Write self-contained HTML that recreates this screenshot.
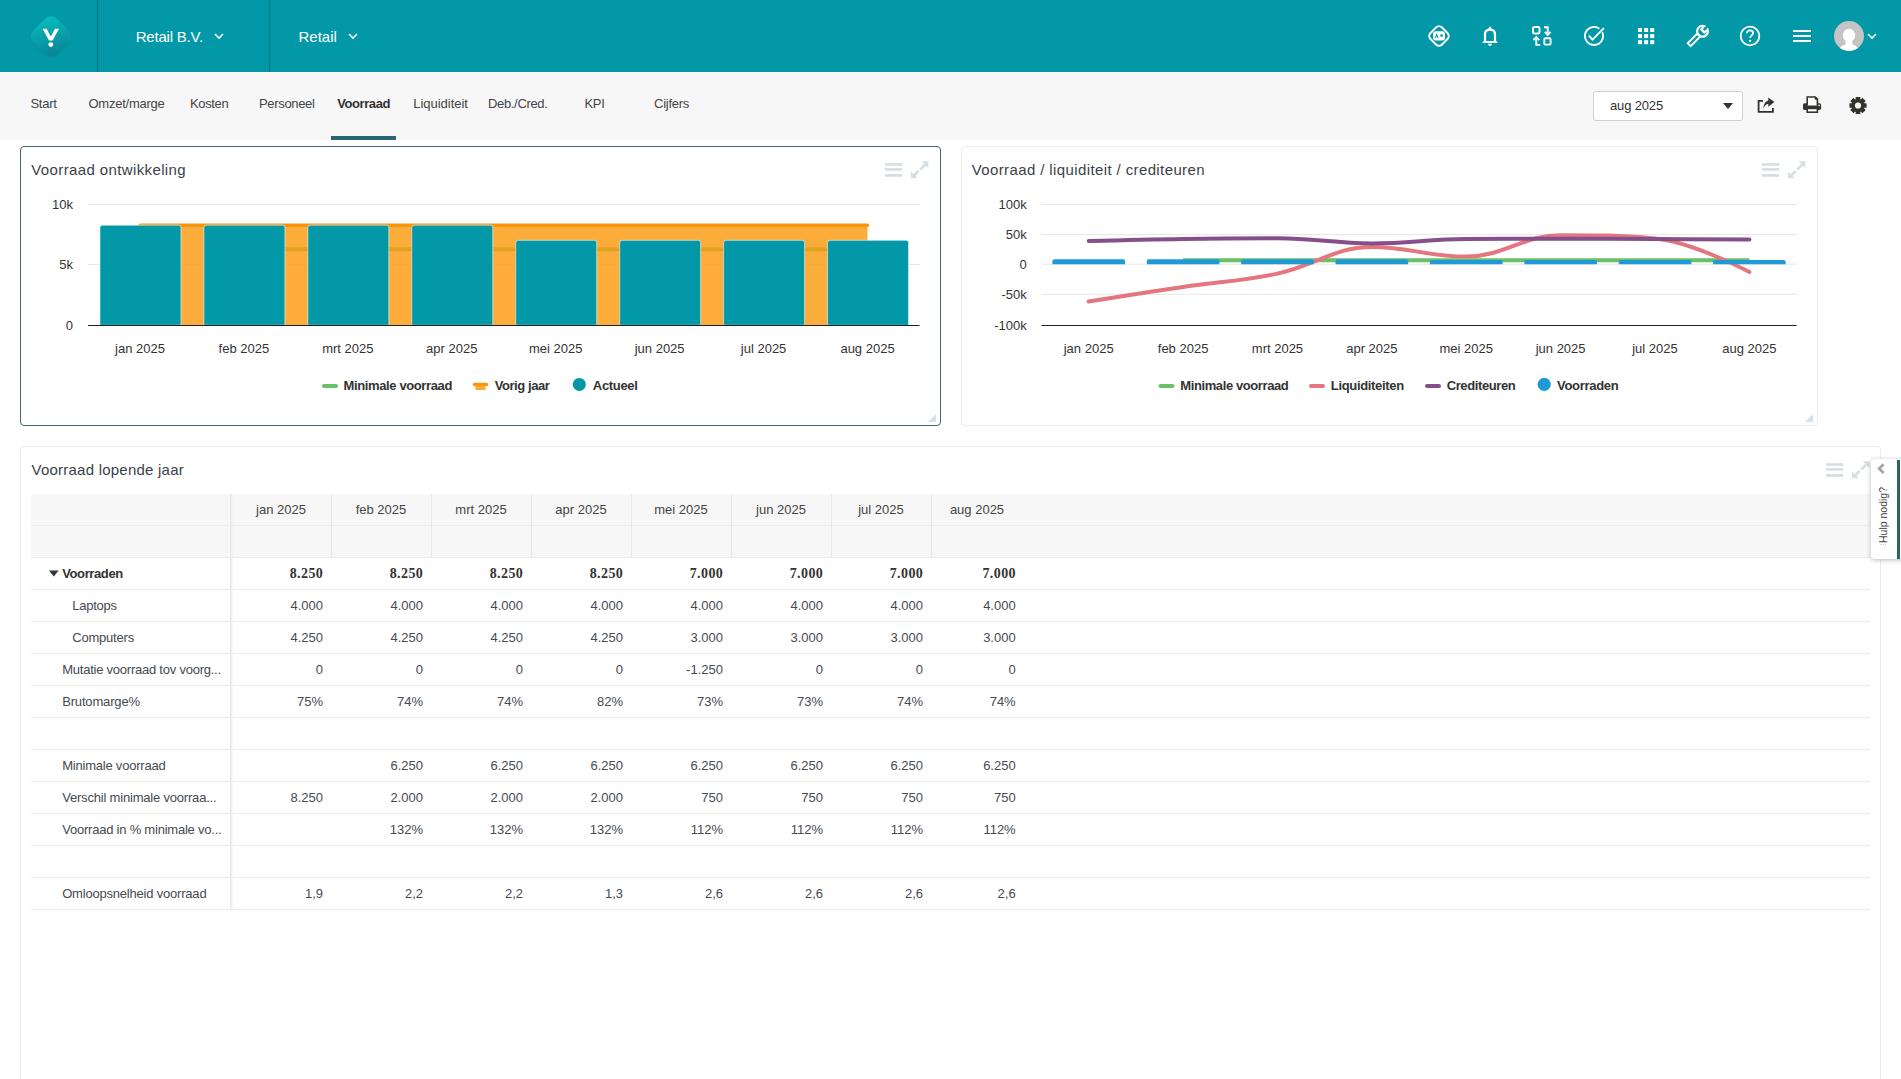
<!DOCTYPE html>
<html><head><meta charset="utf-8"><title>Voorraad</title>
<style>
html,body{margin:0;padding:0;width:1901px;height:1079px;overflow:hidden;background:#fff;}
body{position:relative;font-family:"Liberation Sans",sans-serif;}
.t{position:absolute;white-space:nowrap;}
</style></head><body>
<div style="position:absolute;left:0;top:0;width:1901px;height:72px;background:#0398a8"></div>
<div style="position:absolute;left:97px;top:0;width:1px;height:72px;background:#02707d"></div>
<div style="position:absolute;left:269px;top:0;width:1px;height:72px;background:#02707d"></div>
<svg style="position:absolute;left:21px;top:7px" width="60" height="60" viewBox="0 0 60 60">
<defs><linearGradient id="lg" x1="0" y1="0.2" x2="1" y2="0.8"><stop offset="0" stop-color="#06bcbb"/><stop offset="1" stop-color="#0b8396"/></linearGradient>
<filter id="ls" x="-30%" y="-30%" width="160%" height="160%"><feGaussianBlur stdDeviation="1.2"/></filter></defs>
<rect x="13.2" y="13.4" width="33.6" height="33.6" rx="8.5" transform="rotate(45 30 30.2)" fill="#067f8c" opacity="0.35" filter="url(#ls)"/>
<rect x="13.2" y="12.6" width="33.6" height="33.6" rx="8.5" transform="rotate(45 30 29.4)" fill="url(#lg)"/>
<path d="M21.6 21.8 L25.6 21.8 L29.8 29.6 L34 21.8 L38 21.8 L31.6 33.6 L28 33.6 Z" fill="#fff"/>
<circle cx="29.8" cy="37.6" r="2.4" fill="#fff"/>
</svg>
<div class="t" style="left:135.70px;top:29.30px;font-size:15px;line-height:15px;color:#ffffff;letter-spacing:-0.199px;">Retail B.V.</div>
<div class="t" style="left:298.50px;top:29.30px;font-size:15px;line-height:15px;color:#ffffff;letter-spacing:-0.007px;">Retail</div>
<svg style="position:absolute;left:214px;top:33px" width="10" height="7" viewBox="0 0 10 7"><path d="M1 1 L5 5 L9 1" stroke="#fff" stroke-width="1.6" fill="none"/></svg>
<svg style="position:absolute;left:348px;top:33px" width="10" height="7" viewBox="0 0 10 7"><path d="M1 1 L5 5 L9 1" stroke="#fff" stroke-width="1.6" fill="none"/></svg>
<svg style="position:absolute;left:1427px;top:24px" width="24" height="24" viewBox="0 0 24 24">
<rect x="3.9" y="3.9" width="16.2" height="16.2" rx="4.2" transform="rotate(45 12 12)" fill="none" stroke="#ffffff" stroke-width="2"/>
<rect x="6" y="7.2" width="12" height="9.2" rx="3" fill="#ffffff"/>
<path d="M8.2 14 L9.6 10.6 L11 14" stroke="#0398a8" stroke-width="1.1" fill="none"/>
<circle cx="14.6" cy="11.6" r="1.4" fill="#0398a8"/>
</svg>
<svg style="position:absolute;left:1480px;top:25px" width="20" height="22" viewBox="0 0 20 22">
<path fill-rule="evenodd" fill="#ffffff" d="M2 18 L3.9 15.8 L3.9 9 C3.9 5.6 6.5 3.5 10 3.5 C13.5 3.5 16.1 5.6 16.1 9 L16.1 15.8 L18 18 Z M6.1 15.9 L6.1 9 C6.1 6.9 7.7 5.7 10 5.7 C12.3 5.7 13.9 6.9 13.9 9 L13.9 15.9 Z"/>
<path d="M8.3 4 L10 0.9 L11.7 4 Z" fill="#ffffff"/>
<path d="M8 18.8 L12 18.8 A2 2.1 0 0 1 8 18.8 Z" fill="#ffffff"/>
</svg>
<svg style="position:absolute;left:1531px;top:25px" width="22" height="22" viewBox="0 0 22 22">
<rect x="2" y="2" width="6.5" height="6.5" rx="1.2" fill="none" stroke="#ffffff" stroke-width="1.9"/>
<rect x="13.3" y="13.3" width="6.3" height="6.3" rx="1.2" fill="none" stroke="#ffffff" stroke-width="1.9"/>
<path d="M13 2.2 L16.7 2.2 L16.7 8.6" fill="none" stroke="#ffffff" stroke-width="1.9"/>
<path d="M13.8 6.8 L16.7 9.8 L19.6 6.8" fill="none" stroke="#ffffff" stroke-width="1.9"/>
<path d="M9.2 19.9 L5.3 19.9 L5.3 13.2" fill="none" stroke="#ffffff" stroke-width="1.9"/>
<path d="M2.4 15.2 L5.3 12.2 L8.2 15.2" fill="none" stroke="#ffffff" stroke-width="1.9"/>
</svg>
<svg style="position:absolute;left:1583px;top:25px" width="22" height="22" viewBox="0 0 22 22">
<path d="M15.66 3.24 A9.05 9.05 0 1 0 19.5 7.9" fill="none" stroke="#ffffff" stroke-width="1.9" stroke-linecap="round"/>
<path d="M6.3 11.2 L9.5 14.7 L20.4 3.6" fill="none" stroke="#ffffff" stroke-width="1.9" stroke-linecap="round" stroke-linejoin="round"/>
</svg>
<svg style="position:absolute;left:0;top:0" width="1901" height="72"><rect x="1638.0" y="28.0" width="4" height="4" fill="#ffffff"/><rect x="1638.0" y="34.1" width="4" height="4" fill="#ffffff"/><rect x="1638.0" y="40.2" width="4" height="4" fill="#ffffff"/><rect x="1644.1" y="28.0" width="4" height="4" fill="#ffffff"/><rect x="1644.1" y="34.1" width="4" height="4" fill="#ffffff"/><rect x="1644.1" y="40.2" width="4" height="4" fill="#ffffff"/><rect x="1650.2" y="28.0" width="4" height="4" fill="#ffffff"/><rect x="1650.2" y="34.1" width="4" height="4" fill="#ffffff"/><rect x="1650.2" y="40.2" width="4" height="4" fill="#ffffff"/></svg>
<svg style="position:absolute;left:0;top:0" width="1901" height="72"><g transform="rotate(45 1702.5 31.3)">
<circle cx="1702.5" cy="31.3" r="5.4" fill="none" stroke="#ffffff" stroke-width="2.2"/>
<rect x="1699.3" y="27.6" width="6.4" height="4.4" fill="#ffffff"/>
<rect x="1701.3" y="24" width="2.4" height="5.6" fill="#0398a8"/>
<rect x="1700.4" y="36.6" width="4.2" height="13.6" fill="none" stroke="#ffffff" stroke-width="1.9"/>
</g></svg>
<svg style="position:absolute;left:1739px;top:25px" width="22" height="22" viewBox="0 0 22 22">
<circle cx="11" cy="11" r="9.3" fill="none" stroke="#ffffff" stroke-width="1.8"/>
<path d="M7.9 8.3 C7.9 6.4 9.3 5.3 11 5.3 C12.8 5.3 14.1 6.5 14.1 8.1 C14.1 10.3 11.1 10.5 11.1 13" fill="none" stroke="#ffffff" stroke-width="1.8"/>
<circle cx="11.1" cy="16" r="1.15" fill="#ffffff"/>
</svg>
<svg style="position:absolute;left:1792px;top:29px" width="20" height="14" viewBox="0 0 20 14">
<rect x="1" y="1" width="18" height="2" fill="#ffffff"/><rect x="1" y="6" width="18" height="2" fill="#ffffff"/><rect x="1" y="11" width="18" height="2" fill="#ffffff"/>
</svg>
<svg style="position:absolute;left:1834px;top:21px" width="30" height="30" viewBox="0 0 30 30">
<defs><clipPath id="av"><circle cx="15" cy="15" r="15"/></clipPath></defs>
<circle cx="15" cy="15" r="15" fill="#c4c4c4"/>
<g clip-path="url(#av)"><ellipse cx="15" cy="14.4" rx="6.2" ry="6.6" fill="#fff"/><rect x="11.6" y="17" width="6.8" height="8" fill="#fff"/><ellipse cx="15" cy="30.2" rx="10" ry="7.2" fill="#fff"/></g>
</svg>
<svg style="position:absolute;left:1867px;top:33px" width="10" height="7" viewBox="0 0 10 7"><path d="M1 1 L5 5 L9 1" stroke="#fff" stroke-width="1.6" fill="none"/></svg>
<div style="position:absolute;left:0;top:72px;width:1901px;height:68px;background:#f7f7f7"></div>
<div class="t" style="left:30.40px;top:97.00px;font-size:13px;line-height:13px;color:#444444;letter-spacing:-0.231px;">Start</div>
<div class="t" style="left:88.50px;top:97.00px;font-size:13px;line-height:13px;color:#444444;letter-spacing:-0.250px;">Omzet/marge</div>
<div class="t" style="left:190.00px;top:97.00px;font-size:13px;line-height:13px;color:#444444;letter-spacing:-0.347px;">Kosten</div>
<div class="t" style="left:259.00px;top:97.00px;font-size:13px;line-height:13px;color:#444444;letter-spacing:-0.329px;">Personeel</div>
<div class="t" style="left:337.20px;top:97.00px;font-size:13px;line-height:13px;color:#333333;font-weight:bold;letter-spacing:-0.414px;">Voorraad</div>
<div class="t" style="left:413.20px;top:97.00px;font-size:13px;line-height:13px;color:#444444;letter-spacing:-0.014px;">Liquiditeit</div>
<div class="t" style="left:488.00px;top:97.00px;font-size:13px;line-height:13px;color:#444444;letter-spacing:-0.338px;">Deb./Cred.</div>
<div class="t" style="left:584.40px;top:97.00px;font-size:13px;line-height:13px;color:#444444;letter-spacing:-0.218px;">KPI</div>
<div class="t" style="left:654.00px;top:97.00px;font-size:13px;line-height:13px;color:#444444;letter-spacing:-0.263px;">Cijfers</div>
<div style="position:absolute;left:331px;top:136px;width:65px;height:4px;background:#2b6573"></div>
<div style="position:absolute;left:1593px;top:91px;width:148px;height:28px;border:1px solid #cfcfcf;border-radius:3px;background:#fff"></div>
<div class="t" style="left:1610.00px;top:99.00px;font-size:13px;line-height:13px;color:#333333;letter-spacing:-0.156px;">aug 2025</div>
<svg style="position:absolute;left:1722px;top:102px" width="12" height="8" viewBox="0 0 12 8"><path d="M1 1 L11 1 L6 7 Z" fill="#35332f"/></svg>
<svg style="position:absolute;left:1756px;top:96px" width="20" height="19" viewBox="0 0 20 19">
<path d="M7 4.9 L2.6 4.9 L2.6 15.8 L16.9 15.8 L16.9 12" fill="none" stroke="#35332f" stroke-width="1.8"/>
<path d="M7.3 12.6 C7.6 8.2 9.4 5.2 12.3 4.4 L12.3 1.5 L18.4 6.1 L12.3 10.7 L12.3 7.7 C10.2 8 8.4 9.6 7.3 12.6 Z" fill="#35332f"/>
</svg>
<svg style="position:absolute;left:1802px;top:95px" width="21" height="19" viewBox="0 0 21 19">
<rect x="1" y="8.2" width="18.1" height="6.7" rx="1.6" fill="#35332f"/>
<path d="M5.2 10.6 L5.2 2 L13.2 2 L15.4 4.2 L15.4 10.6" fill="#fff" stroke="#35332f" stroke-width="1.6"/>
<path d="M13.2 2 L13.2 4.2 L15.4 4.2 Z" fill="#35332f" stroke="#35332f" stroke-width="1"/>
<rect x="5.2" y="13.4" width="10.2" height="3.8" fill="#fff" stroke="#35332f" stroke-width="1.6"/>
<circle cx="17.2" cy="10.4" r="0.8" fill="#fff"/>
</svg>
<svg style="position:absolute;left:1848px;top:96px" width="20" height="19" viewBox="0 0 20 19"><g transform="translate(10 9.5)"><circle r="6.6" fill="#35332f"/><rect x="-2.3" y="-8.6" width="4.6" height="4" rx="0.6" transform="rotate(0)" fill="#35332f"/><rect x="-2.3" y="-8.6" width="4.6" height="4" rx="0.6" transform="rotate(45)" fill="#35332f"/><rect x="-2.3" y="-8.6" width="4.6" height="4" rx="0.6" transform="rotate(90)" fill="#35332f"/><rect x="-2.3" y="-8.6" width="4.6" height="4" rx="0.6" transform="rotate(135)" fill="#35332f"/><rect x="-2.3" y="-8.6" width="4.6" height="4" rx="0.6" transform="rotate(180)" fill="#35332f"/><rect x="-2.3" y="-8.6" width="4.6" height="4" rx="0.6" transform="rotate(225)" fill="#35332f"/><rect x="-2.3" y="-8.6" width="4.6" height="4" rx="0.6" transform="rotate(270)" fill="#35332f"/><rect x="-2.3" y="-8.6" width="4.6" height="4" rx="0.6" transform="rotate(315)" fill="#35332f"/><circle r="3.1" fill="#f7f7f7"/></g></svg>
<div style="position:absolute;left:20px;top:146px;width:919px;height:278px;border:1.4px solid #456570;border-radius:4px;background:#fff"></div>
<div style="position:absolute;left:961px;top:146px;width:855px;height:278px;border:1px solid #ececec;border-radius:4px;background:#fff"></div>
<div style="position:absolute;left:20px;top:446px;width:1859px;height:700px;border:1px solid #ececec;border-radius:4px;background:#fff"></div>
<div class="t" style="left:31.30px;top:161.80px;font-size:15px;line-height:15px;color:#3b3f4a;letter-spacing:0.378px;">Voorraad ontwikkeling</div>
<div class="t" style="left:971.70px;top:161.80px;font-size:15px;line-height:15px;color:#3b3f4a;letter-spacing:0.388px;">Voorraad / liquiditeit / crediteuren</div>
<div class="t" style="left:31.50px;top:461.80px;font-size:15px;line-height:15px;color:#3b3f4a;letter-spacing:0.231px;">Voorraad lopende jaar</div>
<svg style="position:absolute;left:885px;top:161px" width="46" height="20" viewBox="0 0 46 20"><rect x="0" y="2.2" width="17.2" height="2.6" fill="#d5dfe3"/><rect x="0" y="7.1" width="17.2" height="2.6" fill="#d5dfe3"/><rect x="0" y="13" width="17.2" height="2.8" fill="#d5dfe3"/><path d="M36.7 0.2 L43.4 0.2 L43.4 6.9 Z" fill="#d5dfe3"/><path d="M26 10.6 L26 17.3 L32.7 17.3 Z" fill="#d5dfe3"/><path d="M40.6 3.2 L35.2 8.6 M33.6 10 L28.6 15" stroke="#d5dfe3" stroke-width="2.5" fill="none"/></svg>
<svg style="position:absolute;left:1762px;top:161px" width="46" height="20" viewBox="0 0 46 20"><rect x="0" y="2.2" width="17.2" height="2.6" fill="#d5dfe3"/><rect x="0" y="7.1" width="17.2" height="2.6" fill="#d5dfe3"/><rect x="0" y="13" width="17.2" height="2.8" fill="#d5dfe3"/><path d="M36.7 0.2 L43.4 0.2 L43.4 6.9 Z" fill="#d5dfe3"/><path d="M26 10.6 L26 17.3 L32.7 17.3 Z" fill="#d5dfe3"/><path d="M40.6 3.2 L35.2 8.6 M33.6 10 L28.6 15" stroke="#d5dfe3" stroke-width="2.5" fill="none"/></svg>
<svg style="position:absolute;left:1825.5px;top:461px" width="46" height="20" viewBox="0 0 46 20"><rect x="0" y="2.2" width="17.2" height="2.6" fill="#d5dfe3"/><rect x="0" y="7.1" width="17.2" height="2.6" fill="#d5dfe3"/><rect x="0" y="13" width="17.2" height="2.8" fill="#d5dfe3"/><path d="M36.7 0.2 L43.4 0.2 L43.4 6.9 Z" fill="#d5dfe3"/><path d="M26 10.6 L26 17.3 L32.7 17.3 Z" fill="#d5dfe3"/><path d="M40.6 3.2 L35.2 8.6 M33.6 10 L28.6 15" stroke="#d5dfe3" stroke-width="2.5" fill="none"/></svg>
<svg style="position:absolute;left:926px;top:412px" width="12" height="12"><path d="M10 2 L10 10 L2 10 Z" fill="#cfe3f0"/></svg>
<svg style="position:absolute;left:1803px;top:412px" width="12" height="12"><path d="M10 2 L10 10 L2 10 Z" fill="#cfe3f0"/></svg>
<svg style="position:absolute;left:0;top:0" width="1901" height="430">
<line x1="88" y1="204.5" x2="919.5" y2="204.5" stroke="#e6e6e6" stroke-width="1"/>
<line x1="88" y1="264.5" x2="919.5" y2="264.5" stroke="#e6e6e6" stroke-width="1"/>
<path d="M 243.91 249.3 L 867.53 249.3" stroke="#6abf69" stroke-width="4" fill="none"/>
<path d="M 139.97 225.15 L 867.53 225.15 L 867.53 325.3 L 139.97 325.3 Z" fill="#fb9a10" fill-opacity="0.82"/>
<path d="M 139.97 225.15 L 867.53 225.15" stroke="#fa960e" stroke-width="3.5" stroke-linecap="round" fill="none"/>
<path d="M 99.97 325.3 L 99.97 227.65 Q 99.97 225.15 102.47 225.15 L 178.47 225.15 Q 180.97 225.15 180.97 227.65 L 180.97 325.3 Z" fill="#0398a8" stroke="#ffffff" stroke-opacity="0.55" stroke-width="1"/>
<path d="M 203.91 325.3 L 203.91 227.65 Q 203.91 225.15 206.41 225.15 L 282.41 225.15 Q 284.91 225.15 284.91 227.65 L 284.91 325.3 Z" fill="#0398a8" stroke="#ffffff" stroke-opacity="0.55" stroke-width="1"/>
<path d="M 307.84 325.3 L 307.84 227.65 Q 307.84 225.15 310.34 225.15 L 386.34 225.15 Q 388.84 225.15 388.84 227.65 L 388.84 325.3 Z" fill="#0398a8" stroke="#ffffff" stroke-opacity="0.55" stroke-width="1"/>
<path d="M 411.78 325.3 L 411.78 227.65 Q 411.78 225.15 414.28 225.15 L 490.28 225.15 Q 492.78 225.15 492.78 227.65 L 492.78 325.3 Z" fill="#0398a8" stroke="#ffffff" stroke-opacity="0.55" stroke-width="1"/>
<path d="M 515.72 325.3 L 515.72 242.82 Q 515.72 240.32 518.22 240.32 L 594.22 240.32 Q 596.72 240.32 596.72 242.82 L 596.72 325.3 Z" fill="#0398a8" stroke="#ffffff" stroke-opacity="0.55" stroke-width="1"/>
<path d="M 619.66 325.3 L 619.66 242.82 Q 619.66 240.32 622.16 240.32 L 698.16 240.32 Q 700.66 240.32 700.66 242.82 L 700.66 325.3 Z" fill="#0398a8" stroke="#ffffff" stroke-opacity="0.55" stroke-width="1"/>
<path d="M 723.59 325.3 L 723.59 242.82 Q 723.59 240.32 726.09 240.32 L 802.09 240.32 Q 804.59 240.32 804.59 242.82 L 804.59 325.3 Z" fill="#0398a8" stroke="#ffffff" stroke-opacity="0.55" stroke-width="1"/>
<path d="M 827.53 325.3 L 827.53 242.82 Q 827.53 240.32 830.03 240.32 L 906.03 240.32 Q 908.53 240.32 908.53 242.82 L 908.53 325.3 Z" fill="#0398a8" stroke="#ffffff" stroke-opacity="0.55" stroke-width="1"/>
<line x1="88" y1="325.5" x2="919.5" y2="325.5" stroke="#1e1e1e" stroke-width="1.2"/>
<line x1="1041.5" y1="204.5" x2="1796.6" y2="204.5" stroke="#e6e6e6" stroke-width="1"/>
<line x1="1041.5" y1="234.6" x2="1796.6" y2="234.6" stroke="#e6e6e6" stroke-width="1"/>
<line x1="1041.5" y1="264.2" x2="1796.6" y2="264.2" stroke="#e6e6e6" stroke-width="1"/>
<line x1="1041.5" y1="294.3" x2="1796.6" y2="294.3" stroke="#e6e6e6" stroke-width="1"/>
<path d="M 1183.08 260.3 L 1749.41 260.3" stroke="#6abf69" stroke-width="4" fill="none"/>
<path d="M 1088.69 301.60 C 1088.69 301.60 1145.33 292.50 1183.08 286.90 C 1220.84 281.30 1239.71 281.56 1277.47 273.60 C 1315.22 265.64 1334.10 247.10 1371.86 247.10 C 1409.61 247.10 1428.49 256.60 1466.24 256.60 C 1504.00 256.60 1522.88 235.20 1560.63 235.20 C 1598.39 235.20 1617.26 235.20 1655.02 238.50 C 1692.77 241.80 1749.41 272.10 1749.41 272.10" stroke="#e3767e" stroke-width="4" fill="none" stroke-linecap="round"/>
<path d="M 1088.69 241.00 C 1088.69 241.00 1145.33 239.44 1183.08 238.90 C 1220.84 238.36 1239.71 238.30 1277.47 238.30 C 1315.22 238.30 1334.10 243.40 1371.86 243.40 C 1409.61 243.40 1428.49 239.10 1466.24 238.90 C 1504.00 238.70 1522.88 238.70 1560.63 238.70 C 1598.39 238.70 1617.26 238.96 1655.02 239.10 C 1692.77 239.24 1749.41 239.40 1749.41 239.40" stroke="#874e8c" stroke-width="4" fill="none" stroke-linecap="round"/>
<path d="M 1052.39 264.2 L 1052.39 261.22 Q 1052.39 259.22 1054.39 259.22 L 1122.99 259.22 Q 1124.99 259.22 1124.99 261.22 L 1124.99 264.2 Z" fill="#1f9ad6"/>
<path d="M 1146.78 264.2 L 1146.78 261.22 Q 1146.78 259.22 1148.78 259.22 L 1217.38 259.22 Q 1219.38 259.22 1219.38 261.22 L 1219.38 264.2 Z" fill="#1f9ad6"/>
<path d="M 1241.17 264.2 L 1241.17 261.22 Q 1241.17 259.22 1243.17 259.22 L 1311.77 259.22 Q 1313.77 259.22 1313.77 261.22 L 1313.77 264.2 Z" fill="#1f9ad6"/>
<path d="M 1335.56 264.2 L 1335.56 261.22 Q 1335.56 259.22 1337.56 259.22 L 1406.16 259.22 Q 1408.16 259.22 1408.16 261.22 L 1408.16 264.2 Z" fill="#1f9ad6"/>
<path d="M 1429.94 264.2 L 1429.94 261.97 Q 1429.94 259.97 1431.94 259.97 L 1500.54 259.97 Q 1502.54 259.97 1502.54 261.97 L 1502.54 264.2 Z" fill="#1f9ad6"/>
<path d="M 1524.33 264.2 L 1524.33 261.97 Q 1524.33 259.97 1526.33 259.97 L 1594.93 259.97 Q 1596.93 259.97 1596.93 261.97 L 1596.93 264.2 Z" fill="#1f9ad6"/>
<path d="M 1618.72 264.2 L 1618.72 261.97 Q 1618.72 259.97 1620.72 259.97 L 1689.32 259.97 Q 1691.32 259.97 1691.32 261.97 L 1691.32 264.2 Z" fill="#1f9ad6"/>
<path d="M 1713.11 264.2 L 1713.11 261.97 Q 1713.11 259.97 1715.11 259.97 L 1783.71 259.97 Q 1785.71 259.97 1785.71 261.97 L 1785.71 264.2 Z" fill="#1f9ad6"/>
<line x1="1041.5" y1="325.5" x2="1796.6" y2="325.5" stroke="#1e1e1e" stroke-width="1.2"/>
<path d="M 324 385.9 L 336 385.9" stroke="#6abf69" stroke-width="4" stroke-linecap="round"/>
<path d="M 474.5 384.6 L 486.5 384.6" stroke="#fa960e" stroke-width="3.5" stroke-linecap="round"/><rect x="475.5" y="386" width="10" height="4" fill="#fb9a10" fill-opacity="0.82"/>
<circle cx="579.3" cy="384.4" r="6.5" fill="#0398a8"/>
<path d="M 1160.5 385.9 L 1172.5 385.9" stroke="#6abf69" stroke-width="4" stroke-linecap="round"/>
<path d="M 1311 385.9 L 1323 385.9" stroke="#e3767e" stroke-width="4" stroke-linecap="round"/>
<path d="M 1427 385.9 L 1439 385.9" stroke="#874e8c" stroke-width="4" stroke-linecap="round"/>
<circle cx="1544.2" cy="384.4" r="6.6" fill="#1f9ad6"/>
</svg>
<div class="t" style="left:52.03px;top:198.10px;font-size:13px;line-height:13px;color:#333333;">10k</div>
<div class="t" style="left:59.27px;top:258.10px;font-size:13px;line-height:13px;color:#333333;">5k</div>
<div class="t" style="left:65.77px;top:318.80px;font-size:13px;line-height:13px;color:#333333;">0</div>
<div class="t" style="left:998.60px;top:198.10px;font-size:13px;line-height:13px;color:#333333;">100k</div>
<div class="t" style="left:1005.83px;top:228.20px;font-size:13px;line-height:13px;color:#333333;">50k</div>
<div class="t" style="left:1019.57px;top:257.80px;font-size:13px;line-height:13px;color:#333333;">0</div>
<div class="t" style="left:1001.50px;top:287.90px;font-size:13px;line-height:13px;color:#333333;">-50k</div>
<div class="t" style="left:994.27px;top:318.80px;font-size:13px;line-height:13px;color:#333333;">-100k</div>
<div class="t" style="left:115.02px;top:341.50px;font-size:13px;line-height:13px;color:#333333;">jan 2025</div>
<div class="t" style="left:1063.74px;top:341.50px;font-size:13px;line-height:13px;color:#333333;">jan 2025</div>
<div class="t" style="left:218.59px;top:341.50px;font-size:13px;line-height:13px;color:#333333;">feb 2025</div>
<div class="t" style="left:1157.77px;top:341.50px;font-size:13px;line-height:13px;color:#333333;">feb 2025</div>
<div class="t" style="left:322.19px;top:341.50px;font-size:13px;line-height:13px;color:#333333;">mrt 2025</div>
<div class="t" style="left:1251.81px;top:341.50px;font-size:13px;line-height:13px;color:#333333;">mrt 2025</div>
<div class="t" style="left:426.11px;top:341.50px;font-size:13px;line-height:13px;color:#333333;">apr 2025</div>
<div class="t" style="left:1346.18px;top:341.50px;font-size:13px;line-height:13px;color:#333333;">apr 2025</div>
<div class="t" style="left:528.97px;top:341.50px;font-size:13px;line-height:13px;color:#333333;">mei 2025</div>
<div class="t" style="left:1439.49px;top:341.50px;font-size:13px;line-height:13px;color:#333333;">mei 2025</div>
<div class="t" style="left:634.70px;top:341.50px;font-size:13px;line-height:13px;color:#333333;">jun 2025</div>
<div class="t" style="left:1535.68px;top:341.50px;font-size:13px;line-height:13px;color:#333333;">jun 2025</div>
<div class="t" style="left:740.81px;top:341.50px;font-size:13px;line-height:13px;color:#333333;">jul 2025</div>
<div class="t" style="left:1632.24px;top:341.50px;font-size:13px;line-height:13px;color:#333333;">jul 2025</div>
<div class="t" style="left:840.41px;top:341.50px;font-size:13px;line-height:13px;color:#333333;">aug 2025</div>
<div class="t" style="left:1722.28px;top:341.50px;font-size:13px;line-height:13px;color:#333333;">aug 2025</div>
<div class="t" style="left:343.60px;top:379.00px;font-size:13px;line-height:13px;color:#333333;font-weight:bold;letter-spacing:-0.381px;">Minimale voorraad</div>
<div class="t" style="left:494.70px;top:379.00px;font-size:13px;line-height:13px;color:#333333;font-weight:bold;letter-spacing:-0.430px;">Vorig jaar</div>
<div class="t" style="left:592.80px;top:379.00px;font-size:13px;line-height:13px;color:#333333;font-weight:bold;letter-spacing:-0.310px;">Actueel</div>
<div class="t" style="left:1180.30px;top:379.00px;font-size:13px;line-height:13px;color:#333333;font-weight:bold;letter-spacing:-0.399px;">Minimale voorraad</div>
<div class="t" style="left:1330.80px;top:379.00px;font-size:13px;line-height:13px;color:#333333;font-weight:bold;letter-spacing:-0.327px;">Liquiditeiten</div>
<div class="t" style="left:1446.70px;top:379.00px;font-size:13px;line-height:13px;color:#333333;font-weight:bold;letter-spacing:-0.388px;">Crediteuren</div>
<div class="t" style="left:1557.00px;top:379.00px;font-size:13px;line-height:13px;color:#333333;font-weight:bold;letter-spacing:-0.294px;">Voorraden</div>
<div style="position:absolute;left:31px;top:494px;width:1839px;height:64px;background:#f7f7f7"></div>
<div style="position:absolute;left:31px;top:525px;width:1839px;height:1px;background:#ebebeb"></div>
<div style="position:absolute;left:31px;top:557px;width:1839px;height:1px;background:#ebebeb"></div>
<div style="position:absolute;left:31px;top:589px;width:1839px;height:1px;background:#ebebeb"></div>
<div style="position:absolute;left:31px;top:621px;width:1839px;height:1px;background:#ebebeb"></div>
<div style="position:absolute;left:31px;top:653px;width:1839px;height:1px;background:#ebebeb"></div>
<div style="position:absolute;left:31px;top:685px;width:1839px;height:1px;background:#ebebeb"></div>
<div style="position:absolute;left:31px;top:717px;width:1839px;height:1px;background:#ebebeb"></div>
<div style="position:absolute;left:31px;top:749px;width:1839px;height:1px;background:#ebebeb"></div>
<div style="position:absolute;left:31px;top:781px;width:1839px;height:1px;background:#ebebeb"></div>
<div style="position:absolute;left:31px;top:813px;width:1839px;height:1px;background:#ebebeb"></div>
<div style="position:absolute;left:31px;top:845px;width:1839px;height:1px;background:#ebebeb"></div>
<div style="position:absolute;left:31px;top:877px;width:1839px;height:1px;background:#ebebeb"></div>
<div style="position:absolute;left:31px;top:909px;width:1839px;height:1px;background:#ebebeb"></div>
<div style="position:absolute;left:230px;top:494px;width:4px;height:416px;background:linear-gradient(90deg,#e6e6e6 0,#eeeeee 35%,rgba(240,240,240,0.5) 60%,rgba(255,255,255,0) 100%)"></div>
<div style="position:absolute;left:330.5px;top:494px;width:1px;height:64px;background:#e8e8e8"></div>
<div style="position:absolute;left:430.5px;top:494px;width:1px;height:64px;background:#e8e8e8"></div>
<div style="position:absolute;left:530.5px;top:494px;width:1px;height:64px;background:#e8e8e8"></div>
<div style="position:absolute;left:630.5px;top:494px;width:1px;height:64px;background:#e8e8e8"></div>
<div style="position:absolute;left:730.5px;top:494px;width:1px;height:64px;background:#e8e8e8"></div>
<div style="position:absolute;left:830.5px;top:494px;width:1px;height:64px;background:#e8e8e8"></div>
<div style="position:absolute;left:930.5px;top:494px;width:1px;height:64px;background:#e8e8e8"></div>
<div class="t" style="left:256.05px;top:503.00px;font-size:13px;line-height:13px;color:#444;">jan 2025</div>
<div class="t" style="left:355.69px;top:503.00px;font-size:13px;line-height:13px;color:#444;">feb 2025</div>
<div class="t" style="left:455.34px;top:503.00px;font-size:13px;line-height:13px;color:#444;">mrt 2025</div>
<div class="t" style="left:555.33px;top:503.00px;font-size:13px;line-height:13px;color:#444;">apr 2025</div>
<div class="t" style="left:654.25px;top:503.00px;font-size:13px;line-height:13px;color:#444;">mei 2025</div>
<div class="t" style="left:756.05px;top:503.00px;font-size:13px;line-height:13px;color:#444;">jun 2025</div>
<div class="t" style="left:858.22px;top:503.00px;font-size:13px;line-height:13px;color:#444;">jul 2025</div>
<div class="t" style="left:949.88px;top:503.00px;font-size:13px;line-height:13px;color:#444;">aug 2025</div>
<svg style="position:absolute;left:49px;top:570px" width="10" height="7"><path d="M0 0.5 L9.6 0.5 L4.8 6.5 Z" fill="#333"/></svg>
<div class="t" style="left:62.20px;top:567.00px;font-size:13px;line-height:13px;color:#333;font-weight:bold;letter-spacing:-0.383px;">Voorraden</div>
<div class="t" style="left:289.70px;top:566.88px;font-family:'Liberation Serif',serif;font-weight:bold;font-size:14px;line-height:14px;color:#333;letter-spacing:0.420px">8.250</div>
<div class="t" style="left:389.70px;top:566.88px;font-family:'Liberation Serif',serif;font-weight:bold;font-size:14px;line-height:14px;color:#333;letter-spacing:0.420px">8.250</div>
<div class="t" style="left:489.70px;top:566.88px;font-family:'Liberation Serif',serif;font-weight:bold;font-size:14px;line-height:14px;color:#333;letter-spacing:0.420px">8.250</div>
<div class="t" style="left:589.70px;top:566.88px;font-family:'Liberation Serif',serif;font-weight:bold;font-size:14px;line-height:14px;color:#333;letter-spacing:0.420px">8.250</div>
<div class="t" style="left:689.70px;top:566.88px;font-family:'Liberation Serif',serif;font-weight:bold;font-size:14px;line-height:14px;color:#333;letter-spacing:0.420px">7.000</div>
<div class="t" style="left:789.70px;top:566.88px;font-family:'Liberation Serif',serif;font-weight:bold;font-size:14px;line-height:14px;color:#333;letter-spacing:0.420px">7.000</div>
<div class="t" style="left:889.70px;top:566.88px;font-family:'Liberation Serif',serif;font-weight:bold;font-size:14px;line-height:14px;color:#333;letter-spacing:0.420px">7.000</div>
<div class="t" style="left:982.40px;top:566.88px;font-family:'Liberation Serif',serif;font-weight:bold;font-size:14px;line-height:14px;color:#333;letter-spacing:0.420px">7.000</div>
<div class="t" style="left:72.20px;top:599.00px;font-size:13px;line-height:13px;color:#454a53;letter-spacing:-0.226px;">Laptops</div>
<div class="t" style="left:290.45px;top:599.00px;font-size:13px;line-height:13px;color:#454a53;">4.000</div>
<div class="t" style="left:390.45px;top:599.00px;font-size:13px;line-height:13px;color:#454a53;">4.000</div>
<div class="t" style="left:490.45px;top:599.00px;font-size:13px;line-height:13px;color:#454a53;">4.000</div>
<div class="t" style="left:590.45px;top:599.00px;font-size:13px;line-height:13px;color:#454a53;">4.000</div>
<div class="t" style="left:690.45px;top:599.00px;font-size:13px;line-height:13px;color:#454a53;">4.000</div>
<div class="t" style="left:790.45px;top:599.00px;font-size:13px;line-height:13px;color:#454a53;">4.000</div>
<div class="t" style="left:890.45px;top:599.00px;font-size:13px;line-height:13px;color:#454a53;">4.000</div>
<div class="t" style="left:983.15px;top:599.00px;font-size:13px;line-height:13px;color:#454a53;">4.000</div>
<div class="t" style="left:72.20px;top:631.00px;font-size:13px;line-height:13px;color:#454a53;letter-spacing:-0.199px;">Computers</div>
<div class="t" style="left:290.45px;top:631.00px;font-size:13px;line-height:13px;color:#454a53;">4.250</div>
<div class="t" style="left:390.45px;top:631.00px;font-size:13px;line-height:13px;color:#454a53;">4.250</div>
<div class="t" style="left:490.45px;top:631.00px;font-size:13px;line-height:13px;color:#454a53;">4.250</div>
<div class="t" style="left:590.45px;top:631.00px;font-size:13px;line-height:13px;color:#454a53;">4.250</div>
<div class="t" style="left:690.45px;top:631.00px;font-size:13px;line-height:13px;color:#454a53;">3.000</div>
<div class="t" style="left:790.45px;top:631.00px;font-size:13px;line-height:13px;color:#454a53;">3.000</div>
<div class="t" style="left:890.45px;top:631.00px;font-size:13px;line-height:13px;color:#454a53;">3.000</div>
<div class="t" style="left:983.15px;top:631.00px;font-size:13px;line-height:13px;color:#454a53;">3.000</div>
<div class="t" style="left:62.20px;top:663.00px;font-size:13px;line-height:13px;color:#454a53;letter-spacing:-0.234px;">Mutatie voorraad tov voorg...</div>
<div class="t" style="left:315.77px;top:663.00px;font-size:13px;line-height:13px;color:#454a53;">0</div>
<div class="t" style="left:415.77px;top:663.00px;font-size:13px;line-height:13px;color:#454a53;">0</div>
<div class="t" style="left:515.77px;top:663.00px;font-size:13px;line-height:13px;color:#454a53;">0</div>
<div class="t" style="left:615.77px;top:663.00px;font-size:13px;line-height:13px;color:#454a53;">0</div>
<div class="t" style="left:686.12px;top:663.00px;font-size:13px;line-height:13px;color:#454a53;">-1.250</div>
<div class="t" style="left:815.77px;top:663.00px;font-size:13px;line-height:13px;color:#454a53;">0</div>
<div class="t" style="left:915.77px;top:663.00px;font-size:13px;line-height:13px;color:#454a53;">0</div>
<div class="t" style="left:1008.47px;top:663.00px;font-size:13px;line-height:13px;color:#454a53;">0</div>
<div class="t" style="left:62.20px;top:695.00px;font-size:13px;line-height:13px;color:#454a53;letter-spacing:-0.164px;">Brutomarge%</div>
<div class="t" style="left:296.97px;top:695.00px;font-size:13px;line-height:13px;color:#454a53;">75%</div>
<div class="t" style="left:396.97px;top:695.00px;font-size:13px;line-height:13px;color:#454a53;">74%</div>
<div class="t" style="left:496.97px;top:695.00px;font-size:13px;line-height:13px;color:#454a53;">74%</div>
<div class="t" style="left:596.97px;top:695.00px;font-size:13px;line-height:13px;color:#454a53;">82%</div>
<div class="t" style="left:696.97px;top:695.00px;font-size:13px;line-height:13px;color:#454a53;">73%</div>
<div class="t" style="left:796.97px;top:695.00px;font-size:13px;line-height:13px;color:#454a53;">73%</div>
<div class="t" style="left:896.97px;top:695.00px;font-size:13px;line-height:13px;color:#454a53;">74%</div>
<div class="t" style="left:989.67px;top:695.00px;font-size:13px;line-height:13px;color:#454a53;">74%</div>
<div class="t" style="left:62.20px;top:759.00px;font-size:13px;line-height:13px;color:#454a53;letter-spacing:-0.216px;">Minimale voorraad</div>
<div class="t" style="left:390.45px;top:759.00px;font-size:13px;line-height:13px;color:#454a53;">6.250</div>
<div class="t" style="left:490.45px;top:759.00px;font-size:13px;line-height:13px;color:#454a53;">6.250</div>
<div class="t" style="left:590.45px;top:759.00px;font-size:13px;line-height:13px;color:#454a53;">6.250</div>
<div class="t" style="left:690.45px;top:759.00px;font-size:13px;line-height:13px;color:#454a53;">6.250</div>
<div class="t" style="left:790.45px;top:759.00px;font-size:13px;line-height:13px;color:#454a53;">6.250</div>
<div class="t" style="left:890.45px;top:759.00px;font-size:13px;line-height:13px;color:#454a53;">6.250</div>
<div class="t" style="left:983.15px;top:759.00px;font-size:13px;line-height:13px;color:#454a53;">6.250</div>
<div class="t" style="left:62.20px;top:791.00px;font-size:13px;line-height:13px;color:#454a53;letter-spacing:-0.193px;">Verschil minimale voorraa...</div>
<div class="t" style="left:290.45px;top:791.00px;font-size:13px;line-height:13px;color:#454a53;">8.250</div>
<div class="t" style="left:390.45px;top:791.00px;font-size:13px;line-height:13px;color:#454a53;">2.000</div>
<div class="t" style="left:490.45px;top:791.00px;font-size:13px;line-height:13px;color:#454a53;">2.000</div>
<div class="t" style="left:590.45px;top:791.00px;font-size:13px;line-height:13px;color:#454a53;">2.000</div>
<div class="t" style="left:701.30px;top:791.00px;font-size:13px;line-height:13px;color:#454a53;">750</div>
<div class="t" style="left:801.30px;top:791.00px;font-size:13px;line-height:13px;color:#454a53;">750</div>
<div class="t" style="left:901.30px;top:791.00px;font-size:13px;line-height:13px;color:#454a53;">750</div>
<div class="t" style="left:994.00px;top:791.00px;font-size:13px;line-height:13px;color:#454a53;">750</div>
<div class="t" style="left:62.20px;top:823.00px;font-size:13px;line-height:13px;color:#454a53;letter-spacing:-0.221px;">Voorraad in % minimale vo...</div>
<div class="t" style="left:389.73px;top:823.00px;font-size:13px;line-height:13px;color:#454a53;">132%</div>
<div class="t" style="left:489.73px;top:823.00px;font-size:13px;line-height:13px;color:#454a53;">132%</div>
<div class="t" style="left:589.73px;top:823.00px;font-size:13px;line-height:13px;color:#454a53;">132%</div>
<div class="t" style="left:690.70px;top:823.00px;font-size:13px;line-height:13px;color:#454a53;">112%</div>
<div class="t" style="left:790.70px;top:823.00px;font-size:13px;line-height:13px;color:#454a53;">112%</div>
<div class="t" style="left:890.70px;top:823.00px;font-size:13px;line-height:13px;color:#454a53;">112%</div>
<div class="t" style="left:983.40px;top:823.00px;font-size:13px;line-height:13px;color:#454a53;">112%</div>
<div class="t" style="left:62.20px;top:887.00px;font-size:13px;line-height:13px;color:#454a53;letter-spacing:-0.201px;">Omloopsnelheid voorraad</div>
<div class="t" style="left:304.92px;top:887.00px;font-size:13px;line-height:13px;color:#454a53;">1,9</div>
<div class="t" style="left:404.92px;top:887.00px;font-size:13px;line-height:13px;color:#454a53;">2,2</div>
<div class="t" style="left:504.92px;top:887.00px;font-size:13px;line-height:13px;color:#454a53;">2,2</div>
<div class="t" style="left:604.92px;top:887.00px;font-size:13px;line-height:13px;color:#454a53;">1,3</div>
<div class="t" style="left:704.92px;top:887.00px;font-size:13px;line-height:13px;color:#454a53;">2,6</div>
<div class="t" style="left:804.92px;top:887.00px;font-size:13px;line-height:13px;color:#454a53;">2,6</div>
<div class="t" style="left:904.92px;top:887.00px;font-size:13px;line-height:13px;color:#454a53;">2,6</div>
<div class="t" style="left:997.62px;top:887.00px;font-size:13px;line-height:13px;color:#454a53;">2,6</div>
<div style="position:absolute;left:1871px;top:459px;width:40px;height:100px;background:#fff;border-radius:4px;box-shadow:0 1px 5px rgba(0,0,0,0.28)"></div>
<div style="position:absolute;left:1897px;top:460px;width:3px;height:98.5px;background:#2b6270"></div>
<svg style="position:absolute;left:1876px;top:463px" width="10" height="12"><path d="M7.6 1.2 L3.2 5.6 L7.6 10" stroke="#a6a6a6" stroke-width="2.8" fill="none"/></svg>
<div class="t" style="left:1856px;top:509.5px;width:54px;height:12px;font-size:10.5px;line-height:12px;color:#444;transform:rotate(-90deg);transform-origin:27px 6px;text-align:center;white-space:nowrap">Hulp nodig?</div>
<svg style="position:absolute;left:1880px;top:543px" width="7" height="3"><circle cx="1" cy="1.5" r="0.55" fill="#bbb"/><circle cx="3.2" cy="1.5" r="0.55" fill="#bbb"/><circle cx="5.4" cy="1.5" r="0.55" fill="#bbb"/></svg>
</body></html>
